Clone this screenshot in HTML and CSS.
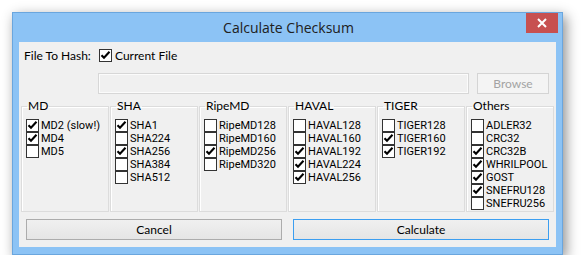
FILE: index.html
```html
<!DOCTYPE html>
<html>
<head>
<meta charset="utf-8">
<link rel="stylesheet" href="styles.css">
<title>Calculate Checksum</title>
</head>
<body>
<div class="window">
  <div class="titlebar">
    <span class="title">Calculate Checksum</span>
    <div class="close"><svg width="10" height="10" viewBox="0 0 10 10"><path d="M1 1 L9 9 M9 1 L1 9" stroke="#fff" stroke-width="2"/></svg></div>
  </div>
  <div class="client">
    <div class="row-file">
      <span class="lbl">File To Hash:</span>
      <span class="cb on"></span>
      <span class="lbl2">Current File</span>
    </div>
    <div class="row-path">
      <div class="field"></div>
      <div class="btn-disabled">Browse</div>
    </div>
    <div class="groups">
      <fieldset class="grp"><legend>MD</legend>
        <div class="item"><span class="cb on"></span>MD2 (slow!)</div>
        <div class="item"><span class="cb on"></span>MD4</div>
        <div class="item"><span class="cb"></span>MD5</div>
      </fieldset>
      <fieldset class="grp"><legend>SHA</legend>
        <div class="item"><span class="cb on"></span>SHA1</div>
        <div class="item"><span class="cb"></span>SHA224</div>
        <div class="item"><span class="cb on"></span>SHA256</div>
        <div class="item"><span class="cb"></span>SHA384</div>
        <div class="item"><span class="cb"></span>SHA512</div>
      </fieldset>
      <fieldset class="grp"><legend>RipeMD</legend>
        <div class="item"><span class="cb"></span>RipeMD128</div>
        <div class="item"><span class="cb"></span>RipeMD160</div>
        <div class="item"><span class="cb on"></span>RipeMD256</div>
        <div class="item"><span class="cb"></span>RipeMD320</div>
      </fieldset>
      <fieldset class="grp"><legend>HAVAL</legend>
        <div class="item"><span class="cb"></span>HAVAL128</div>
        <div class="item"><span class="cb"></span>HAVAL160</div>
        <div class="item"><span class="cb on"></span>HAVAL192</div>
        <div class="item"><span class="cb on"></span>HAVAL224</div>
        <div class="item"><span class="cb on"></span>HAVAL256</div>
      </fieldset>
      <fieldset class="grp"><legend>TIGER</legend>
        <div class="item"><span class="cb"></span>TIGER128</div>
        <div class="item"><span class="cb on"></span>TIGER160</div>
        <div class="item"><span class="cb on"></span>TIGER192</div>
      </fieldset>
      <fieldset class="grp"><legend>Others</legend>
        <div class="item"><span class="cb"></span>ADLER32</div>
        <div class="item"><span class="cb"></span>CRC32</div>
        <div class="item"><span class="cb on"></span>CRC32B</div>
        <div class="item"><span class="cb on"></span>WHRILPOOL</div>
        <div class="item"><span class="cb on"></span>GOST</div>
        <div class="item"><span class="cb on"></span>SNEFRU128</div>
        <div class="item"><span class="cb"></span>SNEFRU256</div>
      </fieldset>
    </div>
    <div class="row-buttons">
      <div class="btn">Cancel</div>
      <div class="btn default">Calculate</div>
    </div>
  </div>
</div>
</body>
</html>
```
FILE: styles.css
```css
html, body {
  margin: 0;
  padding: 0;
  background: #ffffff;
}
body {
  font-family: "Lato", "Liberation Sans", sans-serif;
  font-size: 12px;
  color: #000;
}
.window {
  margin: 12px 0 0 12px;
  width: 551px;
  box-sizing: border-box;
  background: #8cc3f5;
  border: 1px solid #6aa6de;
  box-shadow: 3px 4px 12px rgba(0, 0, 0, 0.45);
  padding: 0 6px 7px 6px;
}
.titlebar {
  position: relative;
  height: 29px;
  display: flex;
  justify-content: center;
  align-items: center;
}
.title {
  font-family: "Open Sans", "Liberation Sans", sans-serif;
  font-size: 14px;
  color: #202020;
  padding-left: 2px;
}
.close {
  position: absolute;
  top: 0;
  right: -2px;
  width: 32px;
  height: 20px;
  background: #c75050;
  display: flex;
  align-items: center;
  justify-content: center;
}
.client {
  background: #f0f0f0;
  display: flex;
  flex-direction: column;
  padding-bottom: 7px;
}
.row-file {
  display: flex;
  align-items: center;
  height: 13px;
  margin-top: 7px;
  padding-left: 5px;
}
.lbl {
  width: 75px;
}
.lbl2 {
  margin-left: 3px;
}
.cb {
  width: 13px;
  height: 13px;
  box-sizing: border-box;
  border: 1px solid #333;
  background: #fff;
  flex: none;
  display: inline-block;
}
.cb.on {
  background: #fff url("data:image/svg+xml;utf8,<svg xmlns='http://www.w3.org/2000/svg' width='11' height='11' viewBox='0 0 11 11'><path d='M1.5 5.2 L4 7.8 L9.5 1.8' fill='none' stroke='black' stroke-width='2.1'/></svg>") no-repeat center;
}
.row-path {
  display: flex;
  margin-top: 11px;
  padding-left: 79px;
  gap: 8px;
}
.field {
  width: 371px;
  height: 21px;
  box-sizing: border-box;
  border: 1px solid #d7d7d7;
  box-shadow: inset 0 0 0 1px #fbfbfb;
  background: #f0f0f0;
}
.btn-disabled {
  width: 72px;
  height: 21px;
  box-sizing: border-box;
  border: 1px solid #d4d4d4;
  background: #f4f4f4;
  color: #a3a3a3;
  display: flex;
  align-items: center;
  justify-content: center;
}
.groups {
  display: grid;
  grid-template-columns: repeat(6, 1fr);
  gap: 1px;
  margin: 5px 0 0 2px;
  width: 533px;
  height: 113px;
}
.grp {
  margin: 0;
  padding: 6px 0 0 4px;
  min-width: 0;
  border: 1px solid #dcdcdc;
  box-shadow: inset 1px 1px 0 #fff;
}
.grp legend {
  padding: 0 1px;
  margin-left: 1px;
  line-height: 14px;
  font-size: 12px;
}
.item {
  display: flex;
  align-items: center;
  height: 13px;
  font-family: "Roboto", "Liberation Sans", sans-serif;
  font-size: 11px;
  white-space: nowrap;
}
.item .cb {
  margin-right: 2px;
}
.row-buttons {
  display: flex;
  gap: 11px;
  margin-top: 7px;
  padding-left: 7px;
}
.btn {
  width: 256px;
  height: 21px;
  box-sizing: border-box;
  border: 1px solid #acacac;
  background: linear-gradient(#f0f0f0, #e5e5e5);
  display: flex;
  align-items: center;
  justify-content: center;
  color: #000;
}
.btn.default {
  border-color: #3c9ef0;
}
```
